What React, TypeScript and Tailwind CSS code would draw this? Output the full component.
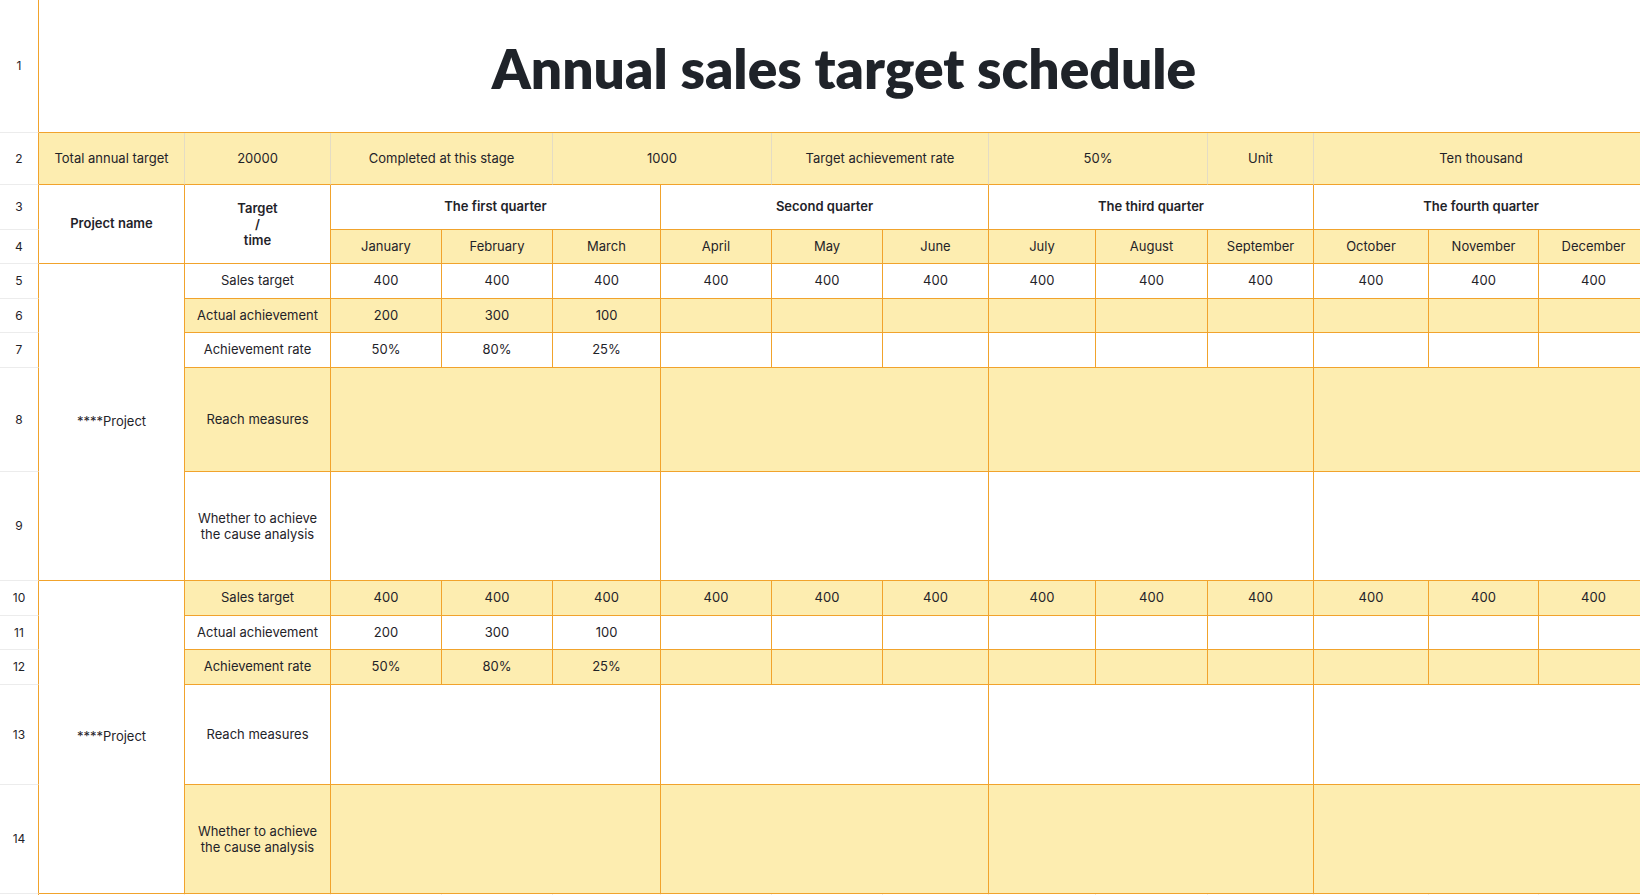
import React from 'react';
import clsx from 'clsx';

const months = [
  'January', 'February', 'March', 'April', 'May', 'June',
  'July', 'August', 'September', 'October', 'November', 'December',
];

const quarters = ['The first quarter', 'Second quarter', 'The third quarter', 'The fourth quarter'];

const projects = [
  { name: '****Project', firstYellow: false, start: 5 },
  { name: '****Project', firstYellow: true, start: 10 },
];

const sales = months.map(() => '400');
const actual = ['200', '300', '100', '', '', '', '', '', '', '', '', ''];
const rates = ['50%', '80%', '25%', '', '', '', '', '', '', '', '', ''];

function Cell({ children, className }: { children?: React.ReactNode; className?: string }) {
  return (
    <div
      className={clsx(
        'flex items-center justify-center text-center border-r border-b border-[#f1a32c] text-[13px] text-[#1f2329]',
        className
      )}
    >
      {children}
    </div>
  );
}

function RowNum({ n }: { n: number }) {
  return (
    <div className="flex items-center justify-center border-r border-b border-r-[#f1a32c] border-b-[#ececec] bg-white text-[12px] text-[#1f2329]">
      {n}
    </div>
  );
}

function ProjectRows({ name, firstYellow, start }: { name: string; firstYellow: boolean; start: number }) {
  const bg = (i: number) => ((i % 2 === 0) === firstYellow ? 'bg-[#fdedb0]' : 'bg-white');
  const valueRows = [sales, actual, rates];
  const labels = ['Sales target', 'Actual achievement', 'Achievement rate'];

  return (
    <>
      {valueRows.map((vals, i) => (
        <React.Fragment key={i}>
          <RowNum n={start + i} />
          {i === 0 && <Cell className="row-span-5 bg-white">{name}</Cell>}
          <Cell className={bg(i)}>{labels[i]}</Cell>
          {vals.map((v, j) => (
            <Cell key={j} className={bg(i)}>{v}</Cell>
          ))}
        </React.Fragment>
      ))}
      <RowNum n={start + 3} />
      <Cell className={bg(3)}>Reach measures</Cell>
      {quarters.map((q) => (
        <Cell key={q} className={clsx('col-span-3', bg(3))} />
      ))}
      <RowNum n={start + 4} />
      <Cell className={clsx('leading-[16px]', bg(4))}>
        Whether to achieve
        <br />
        the cause analysis
      </Cell>
      {quarters.map((q) => (
        <Cell key={q} className={clsx('col-span-3', bg(4))} />
      ))}
    </>
  );
}

export default function App() {
  return (
    <div className="w-screen h-screen overflow-hidden bg-white font-[Inter,'Noto_Sans',sans-serif]">
      <div className="grid w-[1648px] grid-cols-[39px_146px_146px_111px_111px_108px_111px_111px_106px_107px_112px_106px_115px_110px_110px] grid-rows-[133px_52px_45px_34px_35px_34px_35px_104px_109px_35px_34px_35px_100px_109px_40px]">
        {/* row 1: title */}
        <RowNum n={1} />
        <div className="col-span-14 flex items-center justify-center border-b border-[#f1a32c] pt-1">
          <h1 className="font-['Lato',sans-serif] text-[55px] font-extrabold text-[#1f2329]">
            Annual sales target schedule
          </h1>
        </div>

        {/* row 2: summary */}
        <RowNum n={2} />
        {[
          ['Total annual target', ''],
          ['20000', ''],
          ['Completed at this stage', 'col-span-2'],
          ['1000', 'col-span-2'],
          ['Target achievement rate', 'col-span-2'],
          ['50%', 'col-span-2'],
          ['Unit', ''],
          ['Ten thousand', 'col-span-3'],
        ].map(([t, span]) => (
          <Cell key={t} className={clsx('bg-[#fdedb0] border-r-[#e4dcc4]', span)}>
            {t}
          </Cell>
        ))}

        {/* rows 3-4: headers */}
        <RowNum n={3} />
        <Cell className="row-span-2 bg-white font-semibold">Project name</Cell>
        <Cell className="row-span-2 bg-white font-semibold leading-[16px]">
          Target
          <br />/<br />
          time
        </Cell>
        {quarters.map((q) => (
          <Cell key={q} className="col-span-3 bg-white font-semibold">
            {q}
          </Cell>
        ))}
        <RowNum n={4} />
        {months.map((m) => (
          <Cell key={m} className="bg-[#fdedb0]">
            {m}
          </Cell>
        ))}

        {projects.map((p) => (
          <ProjectRows key={p.start} name={p.name} firstYellow={p.firstYellow} start={p.start} />
        ))}

        {/* row 15, only its top edge shows */}
        <div className="border-r border-r-[#f1a32c] bg-white" />
        {Array.from({ length: 14 }).map((_, i) => (
          <div key={i} className="border-r border-[#ececec] bg-white" />
        ))}
      </div>
    </div>
  );
}
